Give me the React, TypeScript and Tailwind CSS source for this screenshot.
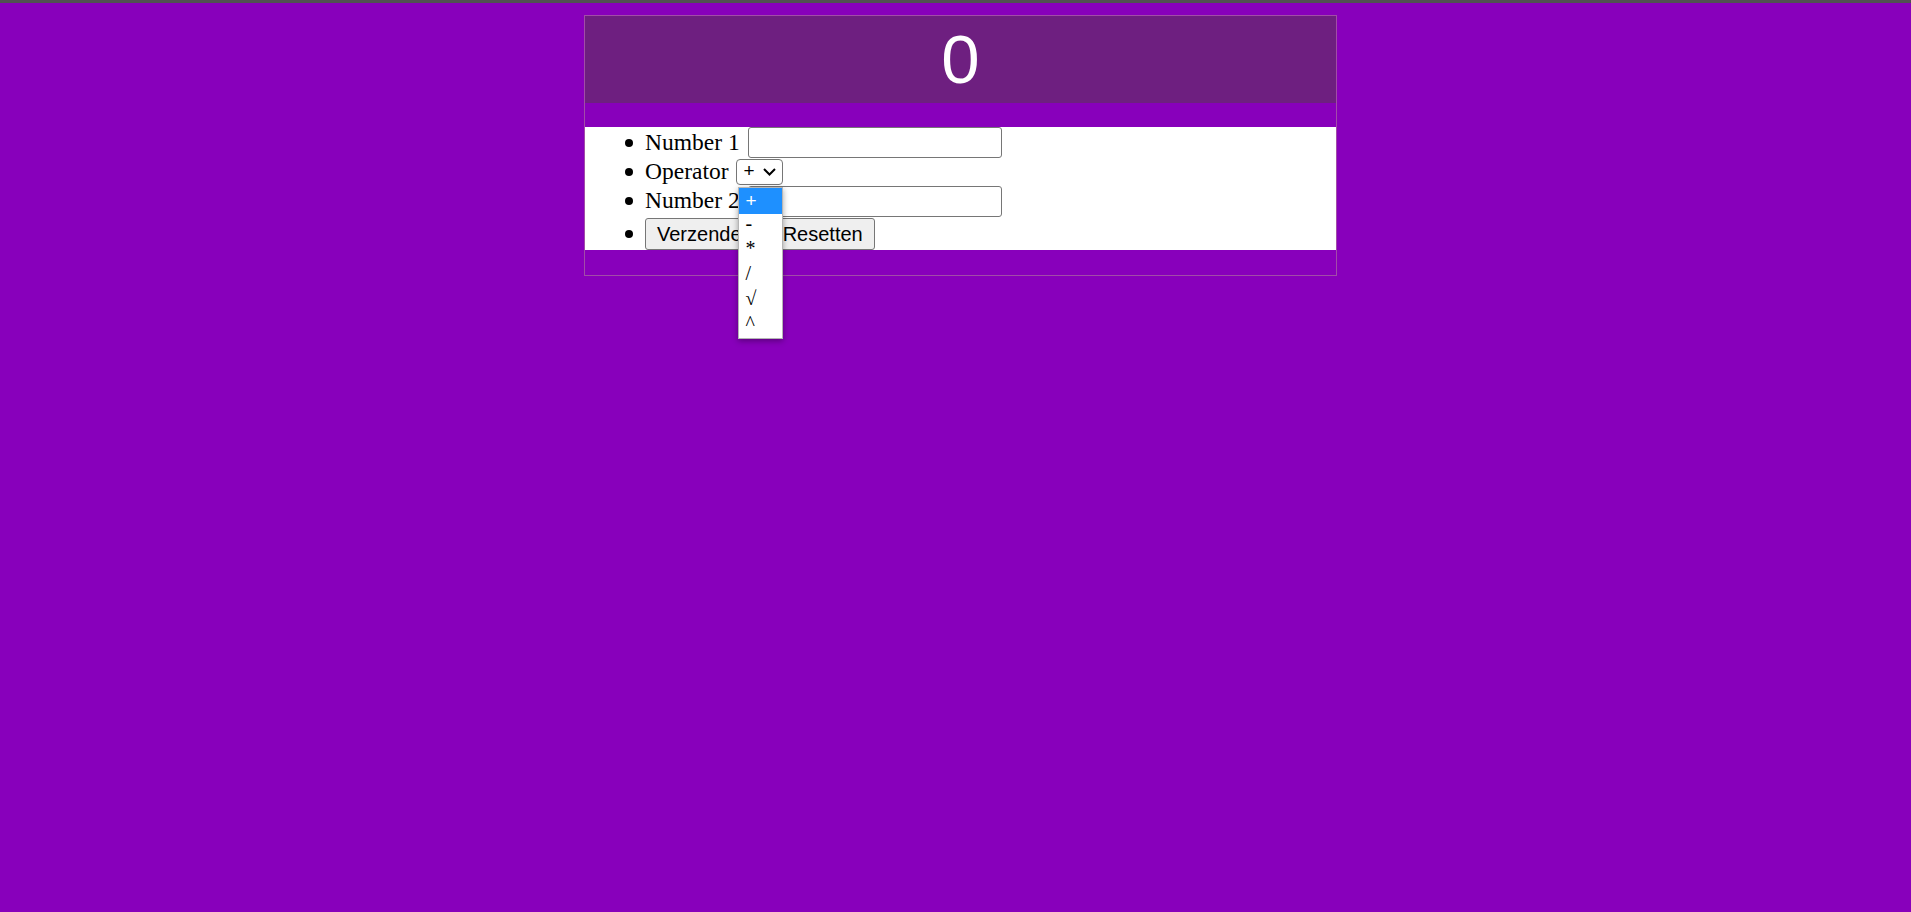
import React from 'react'

const Bullet = () => <span className="w-[8px] h-[8px] rounded-full bg-black mr-[12px] shrink-0" />

const options = ['-', '*', '/', '√', '^']

const App = () => (
  <div className="min-h-screen bg-[#8800bb]">
    <div className="h-[3px] bg-[#515151]" />
    <div className="flex justify-center pl-[10px] pt-[12px]">
      <div className="w-[753px] border border-[#a24ca8]">
        <div className="h-[87px] bg-[#6e1f80] flex items-center justify-center text-white text-[69px] font-['Liberation_Sans',sans-serif]">
          0
        </div>
        <ul className="mt-[24px] mb-[25px] bg-white pl-[40px] font-['Liberation_Serif',serif] text-[23.5px] text-black leading-normal">
          <li className="h-[31px] flex items-center">
            <Bullet />
            <span>Number 1</span>
            <input className="ml-[8px] w-[254px] h-[31px] border border-[#767676] rounded-[3px] bg-white" />
          </li>
          <li className="h-[27px] flex items-center">
            <Bullet />
            <span>Operator</span>
            <div className="relative ml-[7px] h-[26px] w-[47px] border border-[#767676] rounded-[4px] bg-white flex items-center pl-[7px] font-['Liberation_Sans',sans-serif] text-[19px]">
              <span>+</span>
              <svg width="13" height="8" viewBox="0 0 13 8" className="ml-[8px]">
                <path d="M1 1 L6.5 6.5 L12 1" fill="none" stroke="black" strokeWidth="2" />
              </svg>
              <div className="absolute left-[1px] top-[27px] w-[45px] h-[152px] bg-white border border-[#b5b5b5] shadow-[0_2px_6px_rgba(0,0,0,0.35)] z-10 font-['Liberation_Serif',serif] text-[20px] leading-none">
                <div className="h-[26px] bg-[#1e90ff] text-white pl-[7px] flex items-center font-['Liberation_Sans',sans-serif] text-[19px]">+</div>
                {options.map((o) => (
                  <div key={o} className="h-[25px] pl-[7px] pb-[6px] flex items-center">
                    {o}
                  </div>
                ))}
              </div>
            </div>
          </li>
          <li className="h-[32px] flex items-center">
            <Bullet />
            <span>Number 2</span>
            <input className="ml-[8px] w-[254px] h-[31px] border border-[#767676] rounded-[3px] bg-white" />
          </li>
          <li className="h-[33px] flex items-center">
            <Bullet />
            <div className="flex gap-[6px] self-end font-['Liberation_Sans',sans-serif] text-[20px]">
              <button className="h-[32px] px-[11px] border border-[#767676] rounded-[3px] bg-[#efefef]">Verzenden</button>
              <button className="h-[32px] px-[11px] border border-[#767676] rounded-[3px] bg-[#efefef]">Resetten</button>
            </div>
          </li>
        </ul>
      </div>
    </div>
  </div>
)

export default App
